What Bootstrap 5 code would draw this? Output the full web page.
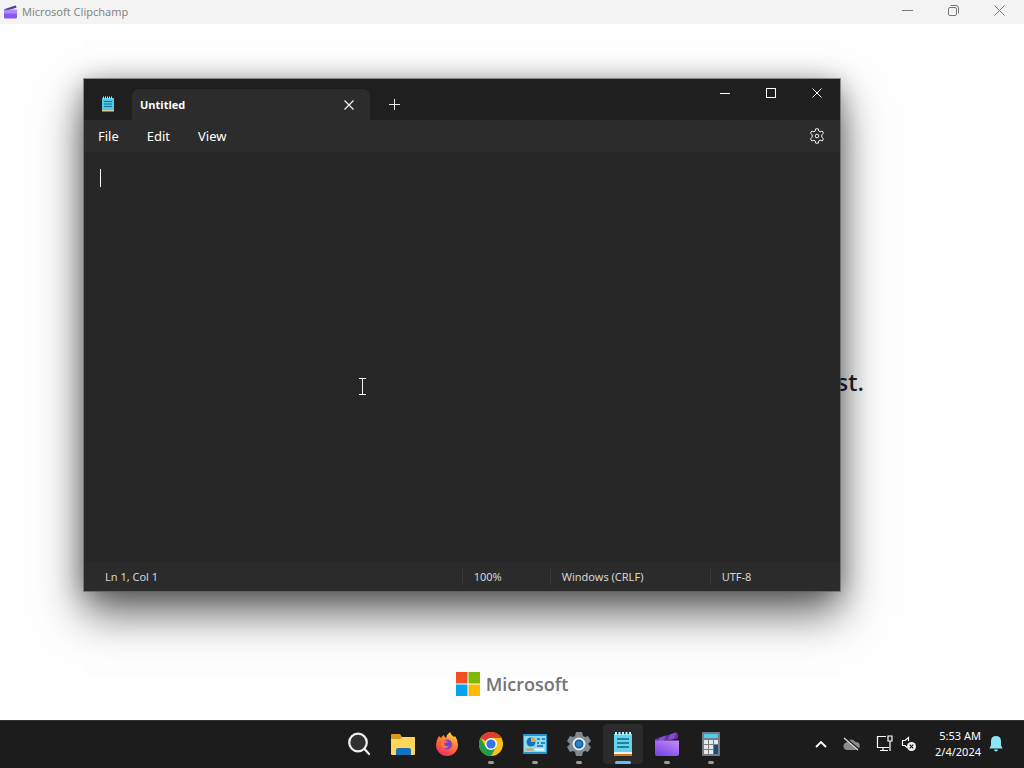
<!DOCTYPE html>
<html lang="en">
<head>
<meta charset="utf-8">
<meta name="viewport" content="width=device-width, initial-scale=1">
<title>Microsoft Clipchamp</title>
<link href="https://cdn.jsdelivr.net/npm/bootstrap@5.3.0/dist/css/bootstrap.min.css" rel="stylesheet">
<script src="https://cdn.jsdelivr.net/npm/bootstrap@5.3.0/dist/js/bootstrap.bundle.min.js" defer></script>
<style>
  body { font-family: "Noto Sans", "Open Sans", sans-serif; background: #fefefe; font-size: 12px; line-height: 16px; }
  button { font-family: inherit; }
  svg { display: block; flex: none; }
  .plain { background: none; border: 0; padding: 0; color: inherit; display: flex; align-items: center; justify-content: center; }

  /* Clipchamp window behind */
  .app-title { height: 24px; background: #f3f3f3; color: #868686; font-size: 11px; padding: 0 2px 0 3px; }
  .app-title .plain { width: 46px; height: 20px; }
  .splash-line { width: 704px; max-width: 90%; padding-top: 340px; font-size: 24px; line-height: 36px; font-weight: 500; color: #20202b; }
  .ms-logo { bottom: 22px; gap: 6px; font-family: "Open Sans", sans-serif; font-size: 18px; line-height: 28px; font-weight: 600; color: #737373; }

  /* Notepad window */
  .notepad { left: 8.2%; right: 18%; top: 55px; bottom: 129px; background: #272727; color: #fff; outline: 1px solid rgba(90,90,90,.6);
    box-shadow: 0 22px 42px rgba(0,0,0,.6), 0 2px 24px rgba(0,0,0,.3); }
  .np-title { height: 41px; background: #1f1f1f; }
  .np-app { width: 48px; padding-top: 8px; }
  .np-tab { width: 238px; height: 31px; background: #2c2c2c; border-radius: 7px 7px 0 0; padding: 0 7px 0 8px; font-family: "Open Sans", sans-serif; font-size: 11px; font-weight: 700; }
  .np-tab .plain { width: 28px; height: 28px; }
  .np-new { width: 50px; height: 31px; }
  .np-ctl .plain { width: 46px; height: 28px; }
  .np-menu { height: 32px; background: #2c2c2c; font-size: 13px; padding: 0 9px 0 14px; gap: 28px; }
  .np-gear { width: 28px; height: 28px; }
  .np-edit { background: transparent; color: #fff; border: 0; resize: none; outline: 0; padding: 16px; font-size: 14px; line-height: 20px; }
  .np-caret { left: 16px; top: 17px; width: 1px; height: 18px; background: #fff; }
  .np-pointer { left: 36.2%; top: 226px; }
  .np-status { height: 29px; background: #2b2b2b; color: #d6d6d6; font-size: 11px; padding-left: 21px; }
  .np-status span + span { border-left: 1px solid #3a3a3a; padding-left: 11px; }
  .st-zoom { width: 88px; } .st-eol { width: 160px; } .st-enc { width: 130px; }

  /* Taskbar */
  .taskbar { height: 48px; background: #1c1c1c; border-top: 1px solid #303030; grid-template-columns: 1fr auto 1fr; color: #fff; padding-bottom: 2px; }
  .apps { padding-left: 46px; gap: 4px; }
  .apps .plain { width: 40px; height: 40px; position: relative; border-radius: 4px; }
  .apps .run::after { content: ""; position: absolute; bottom: 0; width: 6px; height: 3px; border-radius: 2px; background: #9a9a9a; }
  .apps .active { background: #2b2b2b; }
  .apps .active::after { width: 16px; background: #6cb8f0; }
  .tray { padding-right: 21px; }
  .clock { font-size: 11px; line-height: 16px; text-align: right; margin: 0 8px 0 18px; }
</style>
</head>
<body>
<div class="d-flex flex-column vh-100 overflow-hidden">
  <header class="app-title d-flex">
    <div class="d-flex align-items-center gap-1 flex-grow-1">
      <svg width="15" height="14" viewBox="0 0 26 26"><path d="M1 8 22 1q2 0 2 4L3 11z" fill="#51419e"/><path d="M1 9h24v14q0 2-2 2H3q-2 0-2-2z" fill="#8a55f0"/><path d="M1 9h24v7H1z" fill="#a98cfa"/></svg>
      <span>Microsoft Clipchamp</span>
    </div>
    <button class="plain" aria-label="Minimize"><svg width="11" height="11"><path d="M0 5.500h11" stroke="#777"/></svg></button>
    <button class="plain" aria-label="Restore"><svg width="11" height="11" fill="none" stroke="#777"><rect x=".5" y="2.500" width="8" height="8" rx="1.500"/><path d="M2.500.500h5.500q2.500 0 2.500 2.500v5.500"/></svg></button>
    <button class="plain" aria-label="Close"><svg width="11" height="11"><path d="m.5.500 10 10m0-10-10 10" stroke="#777"/></svg></button>
  </header>

  <main class="position-relative flex-grow-1">
    <div class="splash-line mx-auto text-end">st.</div>
    <div class="ms-logo position-absolute start-0 end-0 d-flex justify-content-center align-items-center">
      <svg width="24" height="24"><path d="M0 0h11.500v11.500H0z" fill="#f25022"/><path d="M12.500 0H24v11.500H12.500z" fill="#7fba00"/><path d="M0 12.500h11.500V24H0z" fill="#00a4ef"/><path d="M12.500 12.500H24V24H12.500z" fill="#ffb900"/></svg>
      <span>Microsoft</span>
    </div>

    <section class="notepad position-absolute d-flex flex-column" aria-label="Notepad">
      <div class="np-title d-flex">
        <div class="np-app d-flex justify-content-center align-items-center">
          <svg width="14" height="16" viewBox="0 0 14 16"><path d="M1 2h12v12H1z" fill="#55c8e4"/><path d="M1 14h12v1.500H1z" fill="#d9c9a2"/><path d="M2 1.500h10" stroke="#b8edf7" stroke-width="2" stroke-dasharray="1 1"/><path d="M3 5.500h8M3 8h8M3 10.500h8" stroke="#13718f"/></svg>
        </div>
        <div class="np-tab d-flex align-items-center justify-content-between align-self-end">
          <span>Untitled</span>
          <button class="plain" aria-label="Close tab"><svg width="10" height="10"><path d="m.5.500 9 9m0-9-9 9" stroke="#f2f2f2" stroke-width="1.200"/></svg></button>
        </div>
        <button class="plain np-new align-self-end" aria-label="New tab"><svg width="11" height="11"><path d="M0 5.500h11M5.500 0v11" stroke="#eee"/></svg></button>
        <div class="np-ctl d-flex ms-auto">
          <button class="plain" aria-label="Minimize"><svg width="10" height="11"><path d="M0 5.500h10" stroke="#fff"/></svg></button>
          <button class="plain" aria-label="Maximize"><svg width="10" height="10"><rect x=".5" y=".5" width="9" height="9" fill="none" stroke="#fff"/></svg></button>
          <button class="plain" aria-label="Close"><svg width="10" height="10"><path d="m.5.500 9 9m0-9-9 9" stroke="#fff"/></svg></button>
        </div>
      </div>
      <nav class="np-menu d-flex align-items-center">
        <button class="plain">File</button>
        <button class="plain">Edit</button>
        <button class="plain">View</button>
        <button class="plain np-gear ms-auto" aria-label="Settings">
          <svg width="16" height="16" viewBox="0 0 16 16" fill="none" stroke="#eee" stroke-linejoin="round"><path d="M6.300 3 6.700.8h2.600L9.700 3l1.400.8 2.100-.8 1.300 2.300-1.700 1.400v2.600l1.700 1.400-1.300 2.300-2.100-.8-1.400.8-.4 2.200H6.700L6.300 13l-1.400-.8-2.100.8-1.300-2.300 1.700-1.400V6.700L1.500 5.300 2.800 3l2.100.8z"/><circle cx="8" cy="8" r="1.800"/></svg>
        </button>
      </nav>
      <div class="position-relative flex-grow-1">
        <textarea class="np-edit w-100 h-100 d-block" aria-label="Text editor" spellcheck="false"></textarea>
        <span class="np-caret position-absolute"></span>
        <svg class="np-pointer position-absolute" width="9" height="17" fill="none" stroke="#f4f4f4"><path d="M1 .5h7M1 16.500h7M4.500.500v16"/></svg>
      </div>
      <footer class="np-status d-flex align-items-center">
        <span class="me-auto">Ln 1, Col 1</span>
        <span class="st-zoom">100%</span>
        <span class="st-eol">Windows (CRLF)</span>
        <span class="st-enc">UTF-8</span>
      </footer>
    </section>
  </main>

  <footer class="taskbar d-grid align-items-center flex-shrink-0">
    <div></div>
    <div class="apps d-flex">
      <button class="plain" aria-label="Search"><svg width="24" height="24" viewBox="0 0 24 24" fill="none" stroke="#f0f0f0" stroke-width="2.200" stroke-linecap="round"><circle cx="11" cy="10.500" r="8.800" fill="#303030"/><path d="m17.500 17 4.500 5"/></svg></button>
      <button class="plain" aria-label="File Explorer"><svg width="26" height="24" viewBox="0 0 26 24"><path d="M1 3q0-1 1-1h8l2 3h12q1 0 1 1v5H1z" fill="#d99a1c"/><path d="M1 7h9l2-2h12q1 0 1 1v16q0 1-1 1H2q-1 0-1-1z" fill="#ffd65c"/><path d="M6 23v-5q0-2 2-2h11q2 0 2 2v5z" fill="#1672bd"/></svg></button>
      <button class="plain" aria-label="Firefox"><svg width="24" height="24" viewBox="0 0 24 24"><defs><linearGradient id="fx" x1=".8" y1="0" x2=".3" y2="1"><stop offset="0" stop-color="#ffe34a"/><stop offset=".45" stop-color="#ff7a30"/><stop offset="1" stop-color="#f22d63"/></linearGradient></defs><path d="M4 4q1 1 2 2 1-2 3-3 0 2 2 3 1-4 4-6 1 3 4 5l1-1q3 4 3 9a11 11 0 0 1-22 0q0-5 3-9z" fill="url(#fx)"/><circle cx="12" cy="12.500" r="5" fill="#7b3fd4"/><path d="M6 9q4-2 7 1-3 0-4 2 1 3 5 2-3 4-7 1-2-3-1-6z" fill="#ff7932"/></svg></button>
      <button class="plain run" aria-label="Google Chrome"><svg width="24" height="24" viewBox="0 0 24 24"><circle cx="12" cy="12" r="12" fill="#fbc116"/><path d="M12 12 1.600 6A12 12 0 0 1 22.400 6H12z" fill="#e33b2e"/><path d="M1.600 6A12 12 0 0 0 12 24l5.200-9-5.200 2-5.200-2z" fill="#229a4b"/><circle cx="12" cy="12" r="6" fill="#fff"/><circle cx="12" cy="12" r="4.600" fill="#3375e8"/></svg></button>
      <button class="plain run" aria-label="Control Panel"><svg width="24" height="20" viewBox="0 0 24 20"><rect width="24" height="20" rx="1" fill="#2692cf"/><rect x="1" y="2" width="22" height="16" fill="#8bdcf7"/><circle cx="8" cy="8" r="4.500" fill="#1672b8"/><path d="M8 8V3.500A4.500 4.500 0 0 1 12.500 8z" fill="#f5a638"/><path d="M14 5h3m2 0h3M14 9h2m2 0h4M14 12h6" stroke="#176ba5" stroke-width="1.600"/><path d="M3 15.500h7" stroke="#ed992f" stroke-width="2"/><path d="M12 15.500h9" stroke="#fff" stroke-width="2"/></svg></button>
      <button class="plain run" aria-label="Settings"><svg width="24" height="24" viewBox="0 0 24 24"><path d="m9 0h6l1 4 2 1 3-1 3 5-3 3 3 3-3 5-3-1-2 1-1 4H9l-1-4-2-1-3 1-3-5 3-3-3-3 3-5 3 1 2-1z" fill="#818990"/><circle cx="12" cy="12" r="5.500" fill="#16588f" stroke="#e6edf2" stroke-width="2"/><circle cx="12" cy="12" r="3" fill="#2383cb"/></svg></button>
      <button class="plain run active" aria-label="Notepad"><svg width="20" height="24" viewBox="0 0 20 24"><path d="M1 2h18v19H1z" fill="#66d3ed"/><path d="M1 20h18v2H1z" fill="#f7f2e8"/><path d="M1 22h18v2H1z" fill="#d57622"/><path d="M2 1.500h16" stroke="#b9f0fa" stroke-width="3" stroke-dasharray="2 1.500"/><path d="M4 7h12M4 11h12M4 15h12" stroke="#13657f" stroke-width="1.600"/></svg></button>
      <button class="plain run" aria-label="Clipchamp"><svg width="26" height="26" viewBox="0 0 26 26"><defs><linearGradient id="cc" x1="1" y1="0" x2=".3" y2="1"><stop offset="0" stop-color="#c88cf8"/><stop offset="1" stop-color="#7a49ea"/></linearGradient></defs><path d="M1 8 22 1.500q2.500 0 2 6L3 11H1z" fill="#5d38a0"/><path d="m6 6.500 6-2-2 5-6 1zM16 3.400l6-1.900-2 6.500-6 1z" fill="#8a4bd2"/><path d="M1 9.500h24V23q0 2-2 2H3q-2 0-2-2z" fill="url(#cc)"/></svg></button>
      <button class="plain run" aria-label="Calculator"><svg width="18" height="24" viewBox="0 0 18 24"><rect width="18" height="24" rx="1" fill="#747d84"/><path d="M2 2h14v4H2z" fill="#4fcbed"/><path d="M2 8h4v4H2zm5 0h4v4H7zm5 0h4v4h-4zM2 13h4v4H2zm5 0h4v4H7zm-5 5h4v4H2zm5 0h4v4H7z" fill="#e6e9eb"/><path d="M12 13h4v9h-4z" fill="#164f7d"/></svg></button>
    </div>
    <div class="tray d-flex align-items-center justify-content-end">
      <button class="plain me-3" aria-label="Show hidden icons"><svg width="12" height="8" fill="none" stroke="#fff" stroke-width="1.800"><path d="m1 7 5-5 5 5"/></svg></button>
      <svg class="me-3" width="17" height="14" viewBox="0 0 17 14"><path d="M4 13a3.800 3.800 0 0 1-.5-7.500A5 5 0 0 1 12.500 5a4 4 0 0 1 .5 8z" fill="#8c8c8c"/><path d="m2 1 14 12" stroke="#1c1c1c" stroke-width="2.400"/><path d="m1 1 14 12" stroke="#e6e6e6" stroke-width="1.200"/></svg>
      <svg class="me-2" width="17" height="17" viewBox="0 0 17 17" fill="none" stroke="#fff" stroke-width="1.200"><path d="M10 1.500H1.500v11H13M7 12.500v3M4 15.500h8M14 6v10"/><path d="M12 1h4v5h-4z"/></svg>
      <svg width="16" height="16" viewBox="0 0 16 16" fill="none" stroke="#fff" stroke-width="1.200"><path d="M7.500 5V1.500L4 4.500H1.500v5H4l2 2"/><circle cx="10.500" cy="10.500" r="4.500" fill="#f4f4f4" stroke="none"/><path d="m8.700 8.700 3.600 3.600m0-3.600-3.600 3.600" stroke="#1c1c1c"/></svg>
      <div class="clock">5:53 AM<br>2/4/2024</div>
      <svg width="14" height="16" viewBox="0 0 14 16"><path d="M7 0q4.800 0 5 5v4l1.500 3.500H.5L2 9V5q.200-5 5-5zM5 13.500h4q-.300 2-2 2t-2-2z" fill="#8ce5f2"/></svg>
    </div>
  </footer>
</div>
</body>
</html>
